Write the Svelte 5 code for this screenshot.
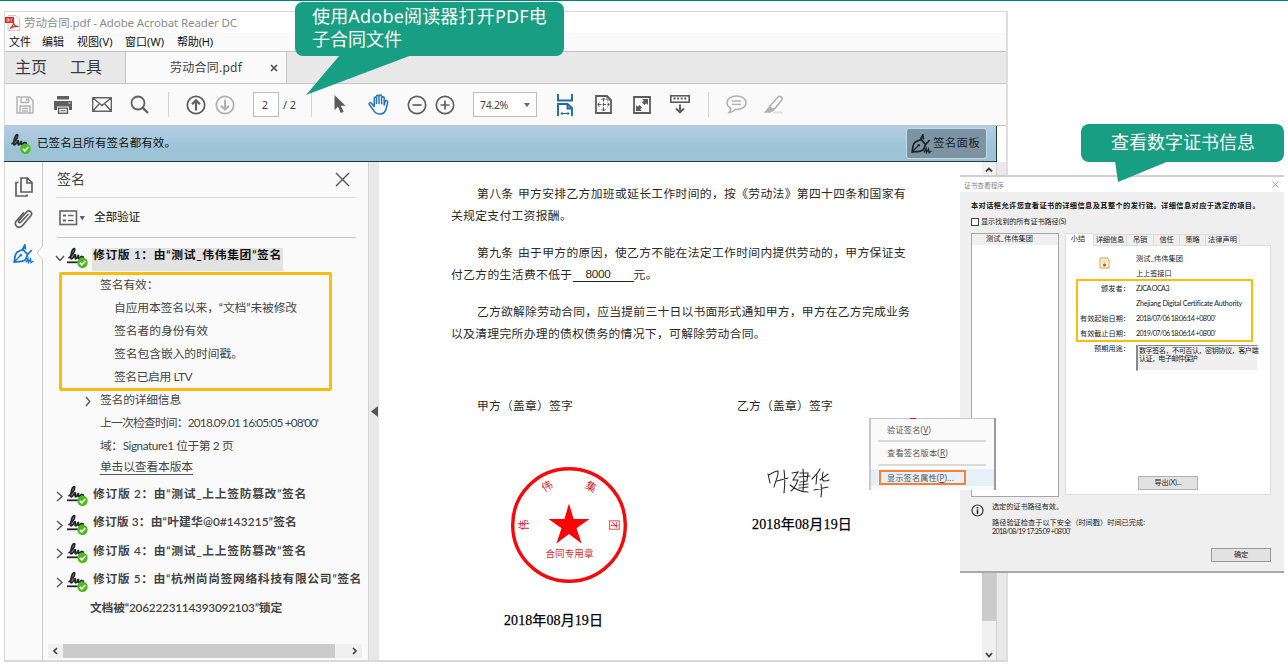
<script>
  // Spreads the letters of a line so that it spans the given width.
  function fit(node, width) {
    const count = [...node.textContent].length;
    node.style.letterSpacing = '0px';
    const natural = node.getBoundingClientRect().width;
    node.style.letterSpacing = `${(width - natural) / count}px`;
  }

  const menus = [
    ['文件', 22, 11], ['编辑', 22, 13], ['视图(V)', 35.5, 12.5], ['窗口(W)', 39, 13], ['帮助(H)', 36, 0]
  ];

  const details = [
    { text: '签名有效：', w: 58.5, level: 1 },
    { text: '自应用本签名以来，“文档”未被修改', w: 183, level: 2 },
    { text: '签名者的身份有效', w: 94, level: 2 },
    { text: '签名包含嵌入的时间戳。', w: 129, level: 2 },
    { text: '签名已启用 LTV', w: 78, level: 2 },
    { text: '签名的详细信息', w: 81, level: 1, arrow: true },
    { text: "上一次检查时间：2018.09.01 16:05:05 +08'00'", w: 218, level: 1 },
    { text: '域：Signature1 位于第 2 页', w: 133, level: 1 },
    { text: '单击以查看本版本', w: 93, level: 1, link: true }
  ];

  const revisions = [
    { text: '修订版 2：由“测试_上上签防篡改”签名', w: 214 },
    { text: '修订版 3：由“叶建华@0#143215”签名', w: 204 },
    { text: '修订版 4：由“测试_上上签防篡改”签名', w: 214 },
    { text: '修订版 5：由“杭州尚尚签网络科技有限公司”签名', w: 269 }
  ];

  const tabs = [
    ['详细信息', 28.5, 33], ['吊销', 14, 27], ['信任', 14, 26], ['策略', 14, 26], ['法律声明', 29, 34]
  ];

  const fields = [
    { label: '', w: 0, value: '测试_伟伟集团', vw: 47 },
    { label: '', w: 0, value: '上上签接口', vw: 35.5 },
    { label: '颁发者：', w: 29, value: 'ZJCA OCA3', vw: 33 },
    { label: '', w: 0, value: 'Zhejiang Digital Certificate Authority', vw: 106 },
    { label: '有效起始日期：', w: 50, value: "2018/07/06 18:06:14 +08'00'", vw: 79 },
    { label: '有效截止日期：', w: 50, value: "2019/07/06 18:06:14 +08'00'", vw: 79 }
  ];
</script>

{#snippet signed(lined)}
  <svg class="signed" width="22" height="22" viewBox="0 0 22 22">
    <path d="M1.500 11C4.500 9.500 8 4.500 7.700 2.300C7.400.800 5.500 2 4.700 5C4 8 3 11.600 4.300 11.800C6 12 7.300 7.500 8.200 7.700C9.300 8 7.200 11.700 8.700 11.800C10.300 11.800 10.700 8.500 11.300 8.500C12 8.600 10.800 11.700 12 11.700C13.300 11.700 13.500 9.300 14.500 9.300C15.200 9.300 14.800 10.500 17 10" fill="none" stroke="#25282b" stroke-width="1.800" />
    {#if lined}<path d="M0 15.300H12" stroke="#25282b" stroke-width="1.800" />{/if}
    <circle cx="15.500" cy="15.800" r="5.200" fill="#4cb91d" />
    <path d="M12.900 15.900L14.900 17.900L18.300 14" fill="none" stroke="#fff" stroke-width="1.600" />
  </svg>
{/snippet}

{#snippet pen()}
  <svg width="21" height="20" viewBox="0 0 21 20" fill="none" stroke="currentColor">
    <path d="M1.300 18C1.500 14 2 10.500 3.800 8.500C5.500 7 8 6.500 9.800 5.500L14.500 10.500C13.500 12.500 13.500 14.500 12 16C9.500 17.800 5 17.800 1.300 18Z" stroke-width="1.800" />
    <path d="M9.300 6L11.800 1L12.500 5.500M14.500 10.500L18.800 6" stroke-width="1.800" />
    <path d="M2 17L7 12" stroke-width="1.200" /><circle cx="7.800" cy="11.200" r="1.300" fill="currentColor" stroke="none" />
    <path d="M13 18.500L15 14.500L15.500 18.500L17.500 15L18 18.500L20.500 17" stroke-width="1.400" />
  </svg>
{/snippet}

<div class="page">
  <div class="app">
    <div class="title">
      <svg width="15" height="16" viewBox="0 0 15 16">
        <path d="M3 .5H11L14.500 4V15.500H3Z" fill="#fafafa" stroke="#c9c9c9" />
        <rect x="0" y="2" width="9" height="6" fill="#e0251b" />
        <path d="M1.500 4H4V6H1.500M5.500 4H7.500M5.500 6H7" stroke="#fff" fill="none" stroke-width=".8" />
        <path d="M5 13.500C8 11 9 9 8.500 7.500C8.500 10 11 12 13.500 11.500C10 11 7 12 5 13.500Z" fill="none" stroke="#d3281e" stroke-width="1.200" />
      </svg>
      <span use:fit={213}>劳动合同.pdf - Adobe Acrobat Reader DC</span>
    </div>
    <div class="menubar">
      {#each menus as [name, w, gap]}<span use:fit={w} style:margin-right="{gap}px">{name}</span>{/each}
    </div>
    <div class="tabbar">
      <div class="home"><span use:fit={32}>主页</span><span use:fit={32}>工具</span></div>
      <div class="filetab">
        <span use:fit={72}>劳动合同.pdf</span>
        <svg width="8" height="8" viewBox="0 0 8 8"><path d="M1 1L7 7M7 1L1 7" stroke="#555" stroke-width="1.700" /></svg>
      </div>
    </div>

    <div class="toolbar">
      <svg width="18" height="18" viewBox="0 0 18 18" fill="none" stroke="#b4b4b4" stroke-width="1.500"><path d="M1 1H13.500L17 4.500V17H1ZM5 1V6.500H12.500V1M4 17V10H14V17M6 12.500H12M6 15H12M10.500 2.500V5" /></svg>
      <svg width="20" height="18" viewBox="0 0 20 18"><path d="M4 0H16V3.500H4ZM1 5H19V14H16V10.500H4V14H1ZM4.800 11.500H15.200V18H4.800Z" fill="#5f5f5f" /><path d="M6.300 12.800H13.700V16.600H6.300Z" fill="#fafafa" /><path d="M7.500 14.800H12.500" stroke="#5f5f5f" /><path d="M15.500 7H17.500" stroke="#eee" /></svg>
      <svg width="20" height="15" viewBox="0 0 20 15" fill="none" stroke="#636363" stroke-width="1.400"><path d="M.7.700H19.300V14.300H.7ZM1 1L10 8.500L19 1M1 14L7.500 6.500M19 14L12.500 6.500" /></svg>
      <svg width="19" height="19" viewBox="0 0 19 19" fill="none" stroke="#606060" stroke-width="1.800"><circle cx="8" cy="8" r="6.500" /><path d="M12.600 12.600L18 18" stroke-width="2.300" /></svg>
      <i class="rule"></i>
      <svg width="20" height="20" viewBox="0 0 20 20" fill="none" stroke="#606060" stroke-width="1.800"><circle cx="10" cy="10" r="8.700" /><path d="M10 15.500V5.500M6 9.300L10 5.300L14 9.300" stroke-width="2.200" /></svg>
      <svg width="20" height="20" viewBox="0 0 20 20" fill="none" stroke="#b0b0b0" stroke-width="1.700"><circle cx="10" cy="10" r="8.700" /><path d="M10 4.500V14.500M6 10.700L10 14.700L14 10.700" stroke-width="2" /></svg>
      <div class="pager"><b>2</b><span use:fit={13}>/ 2</span></div>
      <i class="rule"></i>
      <svg width="12" height="19" viewBox="0 0 12 19"><path d="M.5 0V15L4 11.800L6.800 18L9.600 16.700L6.900 10.800H11.500Z" fill="#5c5c5c" /></svg>
      <svg width="21" height="21" viewBox="0 0 21 21" fill="none" stroke="#2474bd" stroke-width="1.500" stroke-linecap="round" stroke-linejoin="round"><path d="M6.300 12.500V4C6.300 2.500 8.500 2.500 8.500 4V9.500V2.500C8.500.700 11 .700 11 2.500V9.500V2.300C11 .700 13.600.700 13.600 2.300V9.800V4C13.700 2.300 16.200 2.300 16.200 4V11L17.200 7.500C17.800 6 20 6.500 19.700 8.200L18.200 14.500C17.500 18.500 15.500 20 11.800 20C8.500 20 6.500 18.500 5 15.500L1.300 10.500C.500 9 2.300 8.200 3.500 9.300L6.300 12.500" /></svg>
      <svg width="20" height="20" viewBox="0 0 20 20" fill="none" stroke="#606060" stroke-width="1.700"><circle cx="10" cy="10" r="8.700" /><path d="M5.500 10H14.500" /></svg>
      <svg width="20" height="20" viewBox="0 0 20 20" fill="none" stroke="#606060" stroke-width="1.700"><circle cx="10" cy="10" r="8.700" /><path d="M5.500 10H14.500M10 5.500V14.500" /></svg>
      <div class="zoom"><span use:fit={28}>74.2%</span><svg width="6" height="4" viewBox="0 0 6 4"><path d="M0 0H6L3 4Z" fill="#666" /></svg></div>
      <svg width="16" height="22" viewBox="0 0 16 22" fill="none" stroke="#2068ae" stroke-width="1.900"><path d="M1 0V6.500H15V0M1 22V10H10.500L15 14V22M10.500 10V14.500H15" /><path d="M4 19.500H12M5.500 18L4 19.500L5.500 21M10.500 18L12 19.500L10.500 21" stroke-width="1" /></svg>
      <svg width="17" height="19" viewBox="0 0 17 19" fill="none" stroke="#5c5c5c" stroke-width="1.800"><path d="M1 1H12L16 5V18H1Z" /><path d="M8.500 3V16M3 9.500H14" stroke-width="1" stroke-dasharray="3.500 1.200" /><path d="M6.500 5L8.500 3L10.500 5M6.500 14L8.500 16L10.500 14M4.500 7.500L2.800 9.500L4.500 11.500M12.500 7.500L14.200 9.500L12.500 11.500M12 1V5H16" stroke-width="1" /></svg>
      <svg width="18" height="18" viewBox="0 0 18 18"><path d="M1 1H17V17H1Z" fill="none" stroke="#5c5c5c" stroke-width="1.800" /><path d="M9 3H15V9L13.200 7.200L11.500 9L9 6.500L10.800 4.800ZM3 9L4.800 10.800L6.500 9L9 11.500L7.200 13.200L9 15H3Z" fill="#5c5c5c" /></svg>
      <svg width="20" height="19" viewBox="0 0 20 19" fill="none" stroke="#5c5c5c"><rect x=".8" y=".8" width="18.400" height="6.400" stroke-width="1.600" /><path d="M3.500 3.500H17" stroke-width="2" stroke-dasharray="2 1.600" /><path d="M10 9.500V17M6 13.500L10 17.500L14 13.500" stroke-width="1.900" /></svg>
      <i class="rule"></i>
      <svg width="21" height="19" viewBox="0 0 21 19" fill="none" stroke="#b2b2b2" stroke-width="1.600"><path d="M10.500 1C16 1 20 4 20 7.800C20 11.700 16 14.500 10.500 14.500L9 14.400C7.500 16.500 5.500 17.500 3 17.800C4.300 16.500 4.800 15 4.700 13.200C2.300 12 1 10 1 7.800C1 4 5 1 10.500 1Z" /><path d="M6 6H15M6 9.300H15" stroke-width="1.300" /></svg>
      <svg width="20" height="19" viewBox="0 0 20 19" fill="none" stroke="#b2b2b2" stroke-width="1.600"><path d="M6 11L14 2C15.500.500 19 2 18 4.500L11 13.500L6.500 14.500Z" /><path d="M5.500 12L9.500 15L6 17H1.500Z" fill="#b2b2b2" /><path d="M9 17.500H19" stroke="#e3e3e3" stroke-width="2" /></svg>
    </div>

    <div class="notice">
      <div class="status">{@render signed(false)}<span use:fit={139}>已签名且所有签名都有效。</span></div>
      <div class="panelbtn">{@render pen()}<span use:fit={47}>签名面板</span></div>
    </div>

    <div class="main">
      <div class="rail">
        <svg width="18" height="20" viewBox="0 0 18 20" fill="none" stroke="#5f5f5f" stroke-width="1.700"><path d="M6 1H12.500L17 5.500V15H6ZM12 1V6H17M3.500 5.500H1V19H12V17.500" /></svg>
        <svg width="19" height="20" viewBox="0 0 19 20" fill="none" stroke="#5f5f5f" stroke-width="1.700" stroke-linecap="round"><path d="M14 5.500L7 13C5.500 14.500 3.800 13 5.200 11.300L12.500 3C15 .300 19.300 3.500 16.800 6.800L8.500 16.500C5 20.500-1 16.500 2.300 12L9.500 3.800" /></svg>
        <div class="current">{@render pen()}</div>
        <svg class="notch" width="7" height="14" viewBox="0 0 7 14"><path d="M7 0L1 7L7 14" fill="#fafafa" stroke="#cfcfcf" /></svg>
      </div>

      <div class="side">
        <div class="sidehead">
          <span use:fit={28}>签名</span>
          <svg width="15" height="15" viewBox="0 0 15 15"><path d="M1 1L14 14M14 1L1 14" stroke="#555" stroke-width="1.400" /></svg>
        </div>
        <div class="sidetools">
          <svg width="27" height="16" viewBox="0 0 27 16"><rect x="1" y="1" width="16.500" height="13.500" fill="none" stroke="#666" stroke-width="1.600" /><path d="M4 5.500H7M4 10.500H7" stroke="#666" stroke-width="2" /><path d="M9 5.500H14.500M9 10.500H14.500" stroke="#666" stroke-width="1.300" /><path d="M20.500 6H26L23.300 10.500Z" fill="#666" /></svg>
          <span use:fit={46}>全部验证</span>
        </div>
        <div class="rev first">
          <svg width="10" height="7" viewBox="0 0 10 7"><path d="M1 1L5 5.500L9 1" fill="none" stroke="#555" stroke-width="1.400" /></svg>
          {@render signed(true)}
          <div class="sel"><span use:fit={189}>修订版 1：由“测试_伟伟集团”签名</span></div>
        </div>
        <div class="details">
          {#each details as d}
            <div class="detail" class:deep={d.level === 2}>
              {#if d.arrow}<svg class="chev" width="6" height="11" viewBox="0 0 6 11"><path d="M1 1L4.800 5.500L1 10" fill="none" stroke="#555" stroke-width="1.300" /></svg>{/if}
              <span class:link={d.link} use:fit={d.w}>{d.text}</span>
            </div>
          {/each}
          <div class="mark"></div>
        </div>
        {#each revisions as r}
          <div class="rev">
            <svg width="10" height="11" viewBox="0 0 10 11"><path d="M2 1L7 5.500L2 10" fill="none" stroke="#555" stroke-width="1.400" /></svg>
            {@render signed(true)}
            <span use:fit={r.w}>{r.text}</span>
          </div>
        {/each}
        <div class="rev locked"><span use:fit={192}>文档被“2062223114393092103”锁定</span></div>
        <div class="hscroll">
          <svg width="15" height="14" viewBox="0 0 15 14"><path d="M9 4L6 7L9 10" fill="none" stroke="#444" stroke-width="1.700" /></svg>
          <div></div>
          <svg width="15" height="14" viewBox="0 0 15 14"><path d="M6 4L9 7L6 10" fill="none" stroke="#444" stroke-width="1.700" /></svg>
        </div>
      </div>

      <div class="splitter"><svg width="7" height="11" viewBox="0 0 7 11"><path d="M7 0V11L0 5.500Z" fill="#555" /></svg></div>

      <div class="doc">
        <div class="para">
          <p class="in"><span use:fit={36.4}>第八条</span><span class="sp" use:fit={388}>甲方安排乙方加班或延长工作时间的，按《劳动法》第四十四条和国家有</span></p>
          <p><span use:fit={121}>关规定支付工资报酬。</span></p>
        </div>
        <div class="para">
          <p class="in"><span use:fit={36.4}>第九条</span><span class="sp" use:fit={388}>由于甲方的原因，使乙方不能在法定工作时间内提供劳动的，甲方保证支</span></p>
          <p><span use:fit={121.500}>付乙方的生活费不低于</span><span class="blank"><span use:fit={25}>8000</span></span><span use:fit={24.200}>元。</span></p>
        </div>
        <div class="para">
          <p class="in"><span use:fit={433}>乙方欲解除劳动合同，应当提前三十日以书面形式通知甲方，甲方在乙方完成业务</span></p>
          <p><span use:fit={315}>以及清理完所办理的债权债务的情况下，可解除劳动合同。</span></p>
        </div>
        <div class="signs">
          <div class="party">
            <span use:fit={96}>甲方（盖章）签字</span>
            <svg class="seal" width="118" height="118" viewBox="0 0 118 118">
              <circle cx="59" cy="59" r="56.300" fill="none" stroke="#f80808" stroke-width="3.400" />
              <path d="M59 37.500L63.600 53H79.500L66.500 62.300L71.600 77.500L59 68L46.400 77.500L51.500 62.300L38.500 53H54.400Z" fill="#fb0303" />
              <g class="ring">
                <text transform="translate(14 59) rotate(-90)" y="4">伟</text>
                <text transform="translate(37 20) rotate(-30)" y="4">伟</text>
                <text transform="translate(81 20.500) rotate(30)" y="4">集</text>
                <text transform="translate(104 59) rotate(90)" y="4">团</text>
              </g>
              <text class="use" x="59.500" y="91" textLength="48">合同专用章</text>
            </svg>
            <span class="date" use:fit={99}>2018年08月19日</span>
          </div>
          <div class="party">
            <span use:fit={96}>乙方（盖章）签字</span>
            <svg class="hand" width="66" height="32" viewBox="0 0 66 32" fill="none" stroke="#292929" stroke-width="1.100" stroke-linecap="round">
              <path d="M2 7L4 16M3 8C6 6 10 4 12 4C13 8 9 15 8 20M11 14L22 11M18 3C19 10 19 18 18 26" />
              <path d="M26 6L32 5L27 13L32 13C30 18 28 22 25 24M24 18C29 22 34 25 42 25M34 6H42L41 14L34 15M33 10L44 9M33 18L42 17M37 2C38 9 38 16 37 24M33 21L42 20" />
              <path d="M54 2C52 6 49 9 46 12M51 8L50 17M62 7L54 13M57 5C56 10 56 14 58 14C60 14 62 14 63 13M48 23L62 20M55 17C56 22 56 26 55 30" />
            </svg>
            <span class="date right" use:fit={100}>2018年08月19日</span>
          </div>
        </div>
      </div>

      <div class="vscroll">
        <svg width="14" height="16" viewBox="0 0 14 16"><path d="M4 9.500L7 6.500L10 9.500" fill="none" stroke="#444" stroke-width="1.800" /></svg>
        <div></div>
        <svg width="14" height="12" viewBox="0 0 14 12"><path d="M4 4L7 7.500L10 4" fill="none" stroke="#444" stroke-width="1.800" /></svg>
      </div>
      <div class="gutter"></div>
    </div>
  </div>

  <div class="dialog">
    <div class="dtitle"><span use:fit={40}>证书查看程序</span><svg width="7" height="7" viewBox="0 0 7 7"><path d="M.5.500L6.500 6.500M6.500.500L.5 6.500" stroke="#999" stroke-width=".8" /></svg></div>
    <div class="dbody">
      <b class="lead"><span use:fit={289}>本对话框允许您查看证书的详细信息及其整个的发行链。详细信息对应于选定的项目。</span></b>
      <div class="check"><i></i><span use:fit={85}>显示找到的所有证书路径(S)</span></div>
      <div class="cols">
        <div class="tree"><div><span use:fit={47}>测试_伟伟集团</span></div></div>
        <div class="tabset">
          <div class="tabs">
            <div class="on"><span use:fit={14.500}>小结</span></div>
            {#each tabs as [name, w, cell]}<div style:width="{cell}px"><span use:fit={w}>{name}</span></div>{/each}
          </div>
          <div class="sheet">
            {#each fields as f}
              <div class="field"><b><span use:fit={f.w}>{f.label}</span></b><span use:fit={f.vw}>{f.value}</span></div>
            {/each}
            <div class="field"><b><span use:fit={36}>预期用途：</span></b>
              <div class="usage"><span use:fit={119}>数字签名，不可否认，密钥协议，客户端</span><span use:fit={58}>认证，电子邮件保护</span></div>
            </div>
            <div class="btn export"><span use:fit={27}>导出(X)...</span></div>
            <svg class="cert" width="11" height="12" viewBox="0 0 11 12"><path d="M1 1H8L10 3V11H1Z" fill="#fdf5d4" stroke="#c9a661" /><path d="M3 4H8M3 5.800H7" stroke="#d9bf80" stroke-width=".7" /><circle cx="5.500" cy="8" r="1.500" fill="#d64332" /></svg>
            <div class="ymark"></div>
          </div>
        </div>
      </div>
      <div class="info">
        <svg width="13" height="13" viewBox="0 0 13 13"><circle cx="6.500" cy="6.500" r="5.500" fill="none" stroke="#333" stroke-width="1.200" /><path d="M6.500 5.500V9.800M6.500 3V4.600" stroke="#222" stroke-width="1.600" /></svg>
        <div>
          <p><span use:fit={71}>选定的证书路径有效。</span></p>
          <p class="second"><span use:fit={153}>路径验证检查于以下安全（时间戳）时间已完成:</span></p>
          <p class="third"><span use:fit={78}>2018/08/19 17:35:09 +08'00'</span></p>
        </div>
      </div>
      <div class="btn ok"><span use:fit={14}>确定</span></div>
    </div>
  </div>

  <div class="menu">
    <div class="item"><span use:fit={44}>验证签名(<u>V</u>)</span></div>
    <hr />
    <div class="item two"><span use:fit={61}>查看签名版本(<u>R</u>)</span></div>
    <hr />
    <div class="item hot"><span use:fit={67}>显示签名属性(<u>P</u>)...</span></div>
    <i class="speck"></i>
  </div>

  <div class="callout one">
    <svg width="102" height="41" viewBox="0 0 102 41"><path d="M34 0H106L0 40Z" fill="#189e82" /></svg>
    <div><span use:fit={235}>使用Adobe阅读器打开PDF电</span><br /><span use:fit={90}>子合同文件</span></div>
  </div>
  <div class="callout two">
    <svg width="54" height="22" viewBox="0 0 54 22"><path d="M0 0H54L3 21Z" fill="#189e82" /></svg>
    <div><span use:fit={144}>查看数字证书信息</span></div>
  </div>
</div>

<style>
  :global(body) { background: #fff; overflow: hidden; }
  .page { position: relative; box-sizing: border-box; width: 1288px; height: 667px; padding: 10px 0 0 4px; border-top: 1px solid #008272; font-family: "Noto Sans", "Noto Sans CJK SC", sans-serif; overflow: hidden; }
  .page :global(*), .page :global(*::after) { box-sizing: border-box; }
  span { white-space: nowrap; flex: none; display: inline-block; }
  svg { display: block; flex: none; }
  p { margin: 0; }

  .app { width: 1004px; height: 651px; border: 1px solid #d8d8d8; border-right: 2px solid #dedede; border-bottom: 2px solid #d8d8d8; background: #fff; display: flex; flex-direction: column; }
  .title { height: 21px; flex: none; display: flex; align-items: center; gap: 4px; color: #8b8b8b; font-size: 11.500px; }
  .title span { padding-bottom: 1px; }
  .menubar { height: 18px; flex: none; background: #fafafa; display: flex; align-items: center; padding: 0 0 2px 4px; font-size: 11px; color: #111; }
  .tabbar { height: 33px; flex: none; display: flex; border-top: 1px solid #c2c2c2; border-bottom: 1px solid #c6c6c6; background: #e8e8e8; }
  .home { width: 121px; padding: 0 0 3px 10px; border-right: 1px solid #c2c2c2; display: flex; gap: 23px; align-items: center; font-size: 16px; color: #3d3d3d; }
  .filetab { width: 161px; padding-left: 44px; display: flex; align-items: center; gap: 28px; background: #fafafa; border-right: 1px solid #c6c6c6; font-size: 12px; color: #444; }
  .filetab span { padding-bottom: 1px; }
  .toolbar { height: 42px; flex: none; background: #fafafa; border-bottom: 1px solid #bfc4c8; display: grid; align-items: center; justify-items: center; grid-template-columns: 39px 38px 39px 37px 20px 36px 22px 64px 22px 36px 40px 38px 18px 93px 35px 42px 35px 42px 14px 42px 34px; }
  .rule { width: 1px; height: 25px; background: #d4d4d4; }
  .pager { justify-self: start; margin-left: 17px; display: flex; align-items: center; gap: 4px; font-size: 11px; color: #444; }
  .pager b { width: 26px; height: 25px; border: 1px solid #bdbdbd; background: #fff; font-weight: 400; display: flex; align-items: center; justify-content: center; padding: 0 2px 1px 0; }
  .zoom { justify-self: start; margin-left: 19px; width: 64px; height: 25px; border: 1px solid #bdbdbd; background: #fff; display: flex; align-items: center; justify-content: space-between; padding: 0 6px; font-size: 10.500px; color: #444; }
  .notice { width: 993px; height: 36px; flex: none; margin-left: -1px; padding: 0 9px 0 6px; border-right: 1px solid #1e3845; border-bottom: 1px solid #1e3845; background: linear-gradient(#b4cde4, #9dc4d6 65%, #9bc2d5); display: flex; align-items: center; justify-content: space-between; font-size: 11.500px; color: #111; }
  .notice span { padding-bottom: 3px; }
  .status { display: flex; align-items: center; gap: 5px; }
  .panelbtn { width: 81px; height: 31px; border: 1px solid #c3d8e6; border-radius: 3px; background: linear-gradient(#7b95a6, #7d929f); display: flex; align-items: center; gap: 1px; padding-left: 4px; color: #1d2529; }

  .main { flex: 1; min-height: 0; display: flex; }
  .rail { position: relative; width: 38px; flex: none; border-right: 1px solid #cacaca; background: #fafafa; padding-top: 15px; display: flex; flex-direction: column; align-items: center; gap: 12px; }
  .current { color: #1a74d1; margin-top: 3px; }
  .notch { position: absolute; right: -1px; top: 84px; }
  .side { position: relative; width: 326px; flex: none; background: #fafafa; border-right: 1px solid #d5d5d5; padding-left: 14px; color: #454545; font-family: Lato, "Noto Sans CJK SC", sans-serif; font-size: 11.800px; }
  .sidehead { height: 36px; width: 299px; border-bottom: 1px solid #d8d8d8; display: flex; align-items: center; justify-content: space-between; padding-right: 6px; font-size: 14px; }
  .sidehead span { padding-bottom: 3px; }
  .sidetools { height: 40px; width: 299px; border-bottom: 1px solid #c9c9c9; display: flex; align-items: center; gap: 8px; padding: 0 0 3px 2px; color: #111; }
  .sidetools span { padding-bottom: 1px; }
  .sidetools svg { margin-top: 3px; }
  .rev { height: 28.600px; margin-left: -3px; display: flex; align-items: center; font-weight: 600; }
  .rev > span { padding-bottom: 3px; }
  .rev > svg:first-child { margin: 6px 2px 0 1px; }
  .rev > .signed { margin: 5px 4px 0 0; }
  .first { height: 34px; color: #111; }
  .first > .signed { margin-right: 3px; }
  .sel { background: #e2e2e2; height: 23px; margin-top: 9px; line-height: 14px; padding: 0 0 0 1px; width: 191px; }
  .details { position: relative; height: 207.400px; }
  .detail { height: 23.050px; padding-left: 43px; display: flex; align-items: center; position: relative; }
  .deep { padding-left: 57px; }
  .chev { position: absolute; left: 28px; top: 9px; }
  .link { border-bottom: 1px solid #555; line-height: 14px; }
  .mark { position: absolute; left: 2px; top: 0; width: 273px; height: 119px; border: 3px solid #fcbc0c; border-radius: 2px; }
  .locked { padding-left: 36px; }
  .hscroll { position: absolute; left: 5px; bottom: 2px; height: 14px; width: 314px; background: #f0f0f0; display: flex; justify-content: space-between; }
  .hscroll div { width: 272px; margin-right: 12px; background: #cbcbcb; }
  .splitter { width: 10px; flex: none; background: #e8e8e8; display: flex; align-items: center; justify-content: center; }
  .doc { flex: 1; padding: 19px 0 0 72px; font-family: "Liberation Sans", "Noto Sans CJK SC", sans-serif; font-size: 11.800px; color: #2a2a2a; }
  .para { height: 59px; }
  .para p { height: 22.500px; display: flex; align-items: center; }
  .in { padding-left: 26px; }
  .sp { margin-left: 4.500px; }
  .blank { width: 61px; padding-left: 13px; border-bottom: 1px solid #222; line-height: 13px; margin-top: 2px; }
  .signs { display: grid; grid-template-columns: 260px 200px; padding: 39px 0 0 26px; }
  .party { display: flex; flex-direction: column; align-items: flex-start; line-height: 18px; }
  .seal { margin: 51px 0 0 33px; }
  .seal text { fill: #d81e1e; font-size: 12px; text-anchor: middle; }
  .ring text { font-size: 11px; }
  .seal .use { font-size: 9.500px; }
  .hand { margin: 52px 0 0 29px; }
  .date { margin: 28px 0 0 27px; font-family: "Liberation Serif", "Noto Sans CJK SC", serif; font-size: 14px; color: #000; -webkit-text-stroke: .25px #000; }
  .date.right { margin: 17px 0 0 15px; }
  .vscroll { width: 14px; flex: none; background: #f0f0f0; display: flex; flex-direction: column; justify-content: flex-end; }
  .vscroll > svg:first-child { margin-bottom: auto; }
  .vscroll div { height: 160px; background: #cbcbcb; margin-bottom: 28px; }
  .vscroll > svg:last-child { margin-bottom: -1px; }
  .gutter { width: 10px; flex: none; border-left: 1px solid #d2d2d2; background: #e9e9e9; }

  .dialog { position: absolute; left: 960px; top: 174px; width: 324px; height: 398px; border-top: 2px solid #d0d0d0; border-bottom: 2px solid #a8a8a8; background: #efefef; font-family: Lato, "Noto Sans CJK SC", sans-serif; font-size: 7.200px; color: #222; line-height: 10px; }
  .dtitle { height: 15px; background: #fff; display: flex; align-items: center; justify-content: space-between; padding: 0 5px 0 4px; color: #888; font-size: 6.700px; }
  .dbody { padding: 9px 13px 0 11px; display: flex; flex-direction: column; }
  .lead { height: 10px; display: flex; align-items: center; font-weight: 700; color: #111; }
  .check { height: 10px; margin-top: 6px; display: flex; align-items: center; gap: 2px; }
  .check i { width: 8px; height: 8px; border: 1px solid #444; background: #fff; }
  .cols { display: flex; gap: 6px; margin-top: 6px; }
  .tree { width: 88px; height: 264px; border: 1px solid #a6a6a6; background: #fff; }
  .tree div { background: #efefef; height: 11px; padding: 0 0 1px 14px; display: flex; align-items: center; }
  .tabset { width: 206px; }
  .tabs { height: 12px; display: flex; align-items: stretch; }
  .tabs div { border: 1px solid #dcdcdc; border-left: 0; border-bottom: 0; display: flex; align-items: center; justify-content: center; margin-top: 1px; }
  .tabs .on { width: 29px; margin: 0 0 -1px; background: #fff; border-left: 1px solid #dcdcdc; padding: 0 3px 2px 0; z-index: 1; }
  .sheet { position: relative; height: 250px; border: 1px solid #dedede; background: #fff; padding-top: 5px; }
  .field { height: 15px; display: flex; align-items: center; }
  .field b { width: 70px; display: flex; justify-content: flex-end; padding-right: 6px; font-weight: 400; }
  .usage { width: 122px; height: 26px; border: 1px solid #fff; border-left: 2px solid #888; border-top: 1px solid #888; background: #efefef; padding: 1px 0 0 1px; align-self: flex-start; margin-top: 4px; display: flex; flex-direction: column; align-items: flex-start; line-height: 8px; }
  .btn { width: 60px; height: 14px; border: 1px solid #b0b0b0; background: #e2e2e2; display: flex; align-items: center; justify-content: center; }
  .export { margin: 120px 0 0 72px; }
  .cert { position: absolute; left: 33px; top: 11px; }
  .ymark { position: absolute; left: 10px; top: 33px; width: 177px; height: 63px; border: 2px solid #fcbc0c; border-radius: 1px; }
  .info { display: flex; gap: 8px; margin: 5px 0 0; height: 46px; }
  .info svg { margin-top: 2px; }
  .second { margin-top: 6px; }
  .third { margin-top: -1px; }
  .ok { align-self: flex-end; border-color: #999; }

  .menu { position: absolute; left: 869px; top: 417px; width: 127px; height: 72px; background: #fafafa; border-left: 2px solid #c9c9c9; border-top: 1px solid #c9c9c9; border-right: 2px solid #9b9b9b; font-size: 8.200px; color: #555; line-height: 11px; }
  .item { height: 21px; padding: 0 0 1px 16px; display: flex; align-items: center; }
  .menu hr { margin: 0 8px 0 7px; border: 0; height: 2px; background: #dadada; }
  .item.two { height: 22px; }
  .item.hot { margin: 3px 0 0; height: 17px; background: #e5f0f9; position: relative; }
  .hot::after { content: ""; position: absolute; left: 8px; top: 1px; width: 87px; height: 15px; border: 2px solid #f58232; }
  .speck { position: absolute; left: 39px; top: -1px; width: 6px; height: 1px; background: #f03; }

  .callout { position: absolute; color: #fff; font-size: 18px; line-height: 22.500px; }
  .callout div { width: 100%; height: 100%; background: #189e82; border-radius: 8px; }
  .callout svg { position: absolute; }
  .one { left: 295px; top: 1px; width: 269px; height: 54px; }
  .one div { padding: 3px 0 0 17px; }
  .one svg { left: 11px; top: 53px; overflow: visible; }
  .two { left: 1081px; top: 123px; width: 203px; height: 38px; }
  .two div { padding: 7px 0 0 30px; }
  .two svg { left: 34px; top: 37px; }
</style>
